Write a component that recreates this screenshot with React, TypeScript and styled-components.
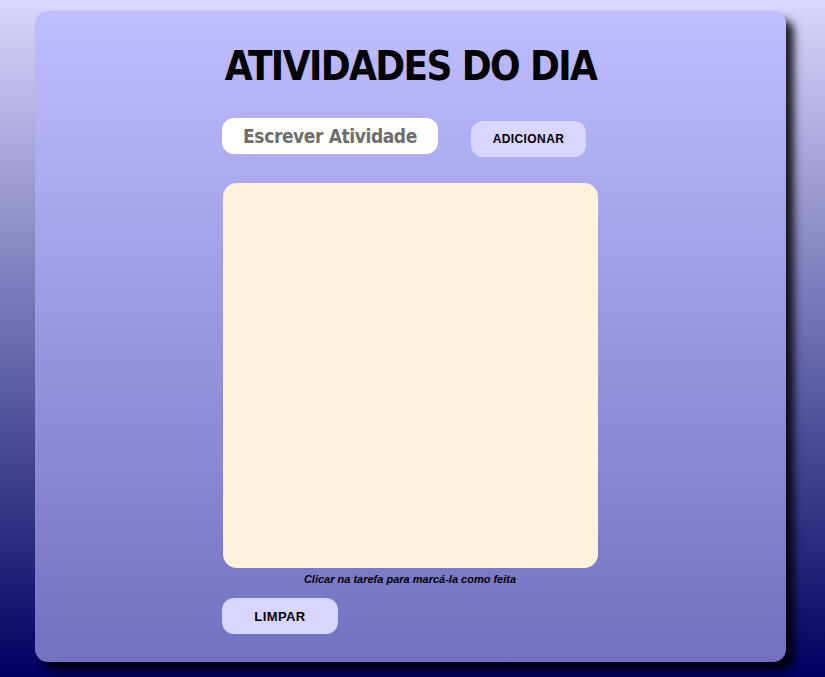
import React, { useState } from "react";
import styled, { createGlobalStyle } from "styled-components";

const Global = createGlobalStyle`
  html, body { margin: 0; padding: 0; height: 100%; }
  body {
    background: linear-gradient(180deg, #d9d7fd 0%, #000060 100%);
    min-height: 677px;
    font-family: "DejaVu Sans", "Liberation Sans", Arial, sans-serif;
  }
`;

const Page = styled.div`
  box-sizing: border-box;
  width: 825px;
  height: 677px;
  padding: 11px 39px 15px 35px;
`;

const Card = styled.main`
  box-sizing: border-box;
  height: 651px;
  border-radius: 13px;
  background: linear-gradient(180deg, #c0befe 0%, #736fc1 100%);
  box-shadow: 8px 8px 8px rgba(0, 0, 0, 0.85);
  padding: 29px 0 0 187px;
  display: flex;
  flex-direction: column;
`;

const Title = styled.h1`
  margin: 0 0 0 -187px;
  text-align: center;
  font-family: "DejaVu Sans", sans-serif;
  font-stretch: condensed;
  font-weight: 700;
  font-size: 40px;
  line-height: 52px;
  letter-spacing: -1.6px;
  color: #000;
`;

const InputRow = styled.div`
  display: flex;
  align-items: flex-start;
  gap: 33px;
  margin-top: 26px;
`;

const TaskInput = styled.input`
  box-sizing: border-box;
  width: 216px;
  height: 36px;
  border: none;
  outline: none;
  border-radius: 12px;
  background: #fff;
  text-align: center;
  font-family: "DejaVu Sans", sans-serif;
  font-stretch: condensed;
  font-weight: 700;
  font-size: 19px;
  letter-spacing: -0.4px;
  color: #000;
  &::placeholder { color: #6e6e6e; opacity: 1; }
`;

const Button = styled.button<{ $w: number; $fs: number; $mt?: number }>`
  box-sizing: border-box;
  width: ${(p) => p.$w}px;
  height: 36px;
  margin-top: ${(p) => p.$mt ?? 0}px;
  border: none;
  border-radius: 12px;
  background: #d8d6fe;
  font-family: "Liberation Sans", Arial, sans-serif;
  font-weight: 700;
  font-size: ${(p) => p.$fs}px;
  color: #000;
  letter-spacing: 0.4px;
  cursor: pointer;
`;

const List = styled.ul`
  box-sizing: border-box;
  width: 375px;
  height: 385px;
  margin: 26px 0 0 1px;
  padding: 10px;
  list-style: none;
  border-radius: 14px;
  background: #fdf3dc;
`;

const Hint = styled.p`
  width: 376px;
  margin: 5px 0 0 0;
  text-align: center;
  font-family: "Liberation Sans", Arial, sans-serif;
  font-style: italic;
  font-weight: 700;
  font-size: 11px;
  line-height: 13px;
  color: #000;
`;

export default function App() {
  const [value, setValue] = useState("");
  return (
    <>
      <Global />
      <Page>
        <Card>
          <Title>ATIVIDADES DO DIA</Title>
          <InputRow>
            <TaskInput
              placeholder="Escrever Atividade"
              value={value}
              onChange={(e) => setValue(e.target.value)}
            />
            <Button $w={115} $fs={12} $mt={3}>ADICIONAR</Button>
          </InputRow>
          <List />
          <Hint>Clicar na tarefa para marcá-la como feita</Hint>
          <Button $w={116} $fs={13} $mt={12}>LIMPAR</Button>
        </Card>
      </Page>
    </>
  );
}
